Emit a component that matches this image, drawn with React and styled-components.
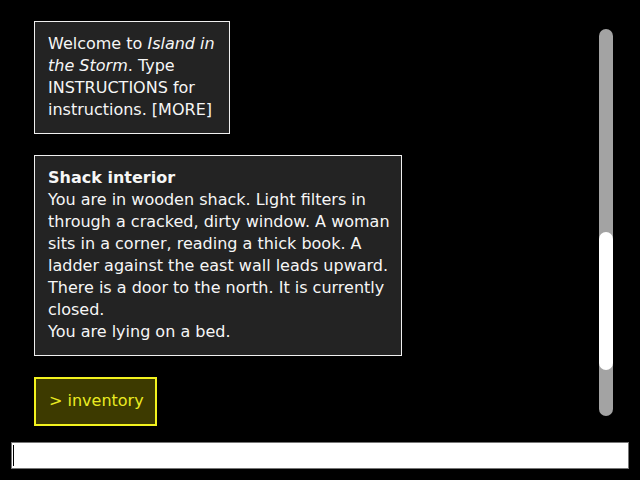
import React from 'react'
import styled, { createGlobalStyle } from 'styled-components'

const GlobalStyle = createGlobalStyle`
    html, body {
        margin: 0;
        padding: 0;
        background: #000;
    }
    body {
        font-family: "DejaVu Sans", Verdana, sans-serif;
        font-size: 16px;
        color: #f6f6f6;
    }
`;

const Screen = styled.div`
    height: 100vh;
    display: flex;
    flex-direction: column;
    overflow: hidden;
`;

const Main = styled.div`
    flex: 1;
    min-height: 0;
    display: flex;
`;

const Log = styled.div`
    flex: 1;
    display: flex;
    flex-direction: column;
    align-items: flex-start;
    gap: 21px;
    padding: 21px 0 0 34px;
`;

const Message = styled.div`
    box-sizing: border-box;
    width: ${(props) => props.$width}px;
    padding: 11px ${(props) => props.$padRight}px 12px 13px;
    background: #232323;
    border: 1px solid #f0f0f0;
    line-height: 22px;
`;

const Title = styled.div`
    font-weight: bold;
`;

const Command = styled.div`
    padding: 11px 11px 12px 13px;
    background: #3d3a00;
    border: 2px solid #f2f21e;
    color: #eaea22;
    line-height: 22px;
`;

const Track = styled.div`
    align-self: flex-start;
    position: relative;
    width: 14px;
    height: 387px;
    margin: 29px 27px 0 0;
    border-radius: 7px;
    background: #a3a3a3;
`;

const Thumb = styled.div`
    position: absolute;
    left: 0;
    right: 0;
    top: 203px;
    height: 138px;
    border-radius: 7px;
    background: #fff;
`;

const PromptWrap = styled.div`
    position: relative;
    display: flex;
    margin: 0 11px 11px;
`;

const Prompt = styled.input`
    flex: 1;
    box-sizing: border-box;
    height: 27px;
    padding: 0 1px;
    border: 1px solid #767676;
    background: #fff;
    color: #000;
    caret-color: transparent;
    font-family: "DejaVu Sans", Verdana, sans-serif;
    font-size: 16px;
    outline: none;
`;

const Caret = styled.span`
    position: absolute;
    left: 2px;
    top: 3px;
    width: 1px;
    height: 21px;
    background: #000;
    pointer-events: none;
`;

const App = () => {
    return (
        <Screen>
            <GlobalStyle />
            <Main>
                <Log>
                    <Message $width={196} $padRight={12}>
                        Welcome to <i>Island in the Storm</i>. Type INSTRUCTIONS for instructions. [MORE]
                    </Message>
                    <Message $width={368} $padRight={7}>
                        <Title>Shack interior</Title>
                        You are in wooden shack. Light filters in through a cracked, dirty window. A woman sits in a corner, reading a thick book. A ladder against the east wall leads upward. There is a door to the north. It is currently closed.
                        <br />
                        You are lying on a bed.
                    </Message>
                    <Command>&gt; inventory</Command>
                </Log>
                <Track>
                    <Thumb />
                </Track>
            </Main>
            <PromptWrap>
                <Prompt autoFocus />
                <Caret />
            </PromptWrap>
        </Screen>
    )
}

export default App
